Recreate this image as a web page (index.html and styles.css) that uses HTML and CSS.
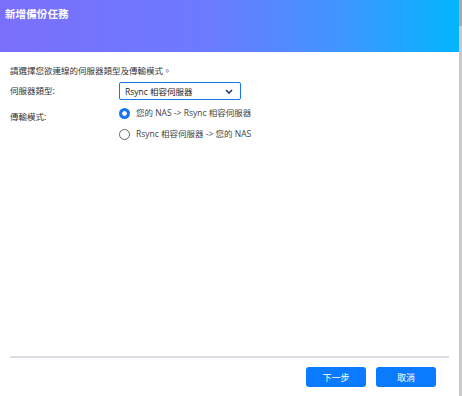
FILE: index.html
```html
<!DOCTYPE html>
<html lang="zh-Hant">
<head>
<meta charset="utf-8">
<link rel="stylesheet" href="styles.css">
</head>
<body>
<div class="frame">
  <div class="dialog">
    <div class="header">新增備份任務</div>
    <div class="content">
      <p class="intro">請選擇您欲連線的伺服器類型及傳輸模式。</p>
      <div class="form">
        <div class="label label-select">伺服器類型:</div>
        <div class="select">
          <span>Rsync 相容伺服器</span>
          <svg class="chev" width="8" height="5" viewBox="0 0 8 5"><path d="M1 1l3 3 3-3" fill="none" stroke="#1f3a66" stroke-width="1.6"/></svg>
        </div>
        <div class="label label-radio">傳輸模式:</div>
        <div class="radios">
          <div class="radio-row"><span class="radio checked"></span><span>您的 NAS -&gt; Rsync 相容伺服器</span></div>
          <div class="radio-row"><span class="radio"></span><span>Rsync 相容伺服器 -&gt; 您的 NAS</span></div>
        </div>
      </div>
    </div>
    <div class="footer">
      <div class="sep"></div>
      <div class="buttons">
        <button class="btn">下一步</button>
        <button class="btn">取消</button>
      </div>
    </div>
  </div>
  <div class="scrollbar"><div class="thumb"></div></div>
</div>
</body>
</html>
```
FILE: styles.css
```css
* { box-sizing: border-box; }
html, body { margin: 0; padding: 0; }
body {
  width: 462px;
  height: 396px;
  overflow: hidden;
  font-family: "Open Sans", "Noto Sans CJK TC", sans-serif;
  color: #333;
  background: #fff;
}
.frame { display: flex; height: 396px; }
.dialog { width: 459px; display: flex; flex-direction: column; }
.header {
  height: 52px;
  background: linear-gradient(to right, #7a6ffb 0%, #6c7aff 45%, #3e96ff 75%, #02b6fe 100%);
  color: #fff;
  font-family: "Noto Sans CJK TC", sans-serif;
  font-size: 10.5px;
  font-weight: 700;
  line-height: 14px;
  padding: 7px 0 0 5px;
  letter-spacing: 0.1px;
}
.content { flex: 1; padding: 0 10px; }
.intro {
  margin: 11px 0 0;
  font-size: 8.5px;
  line-height: 14px;
  font-family: "Noto Sans CJK TC", sans-serif;
}
.form {
  display: grid;
  grid-template-columns: 109px auto;
  margin-top: 5px;
  font-size: 8.5px;
}
.label { font-family: "Noto Sans CJK TC", sans-serif; line-height: 14px; }
.label-select { padding-top: 1px; }
.label-radio { padding-top: 9px; }
.select {
  width: 122px;
  height: 18px;
  border: 1px solid #1677e8;
  border-radius: 2px;
  display: flex;
  align-items: center;
  justify-content: space-between;
  padding: 0 7px 0 5px;
  font-size: 8.5px;
  color: #222;
}
.chev { display: block; }
.radios { display: flex; flex-direction: column; gap: 7px; padding-top: 6px; }
.radio-row { display: flex; align-items: center; gap: 6px; line-height: 14px; color: #444; }
.radio {
  width: 11px;
  height: 11px;
  border-radius: 50%;
  border: 1px solid #666;
  background: #fff;
  flex: none;
}
.radio.checked {
  border: none;
  background: radial-gradient(circle, #fff 0 2px, #1677f0 2.6px);
}
.footer { padding: 0 10px 9px; }
.sep { height: 2px; background: #dcdce4; margin-bottom: 9px; }
.buttons { display: flex; justify-content: flex-end; gap: 10px; padding-right: 13px; }
.btn {
  width: 60px;
  height: 20px;
  border: none;
  border-radius: 3px;
  background: #0a7bff;
  color: #fff;
  font-family: "Noto Sans CJK TC", sans-serif;
  font-size: 9px;
  padding: 0;
}
.scrollbar { width: 3px; background: #c9c9c9; }
.thumb { height: 26px; background: #a9a9a9; }
```
